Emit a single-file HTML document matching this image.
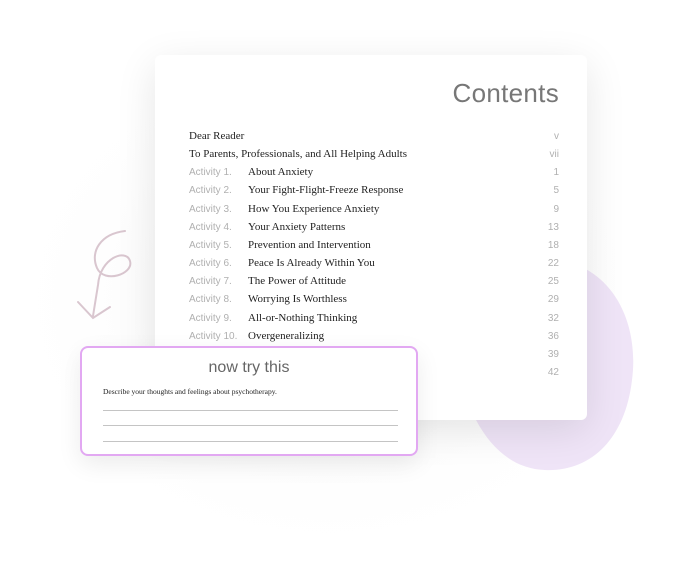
<!DOCTYPE html>
<html><head><meta charset="utf-8"><style>
body{margin:0;width:688px;height:562px;background:#fff;position:relative;overflow:hidden;font-family:"Liberation Serif",serif}
.bg{position:absolute;left:0;top:0}
.card{position:absolute;left:155px;top:55px;width:432px;height:365px;background:#fff;border-radius:6px;box-shadow:0 10px 40px rgba(0,0,0,0.10)}
.h{position:absolute;right:28px;top:23px;font-family:"Liberation Sans",sans-serif;font-size:26px;color:#777;letter-spacing:0.3px}
.row{position:absolute;left:34px;right:28px;height:18px;font-size:11px;color:#222;line-height:18px}
.row .a{position:absolute;left:0;top:1px;font-family:"Liberation Sans",sans-serif;color:#b0b0b0;font-size:10px}
.row .t{position:absolute;left:59px}
.row .n{position:absolute;right:0;top:1px;font-family:"Liberation Sans",sans-serif;color:#b0b0b0;font-size:10px}
.box{position:absolute;left:80px;top:346px;width:334px;height:106px;background:#fff;border:2px solid #e2a8f2;border-radius:8px;box-shadow:0 8px 24px rgba(0,0,0,0.08)}
.box .tt{position:absolute;left:0;right:0;top:11px;text-align:center;font-family:"Liberation Sans",sans-serif;font-size:16px;color:#666}
.box .d{position:absolute;left:21px;top:39px;font-size:7.5px;color:#222}
.ln{position:absolute;left:21px;width:295px;height:1px;background:#c4c4c4}
</style></head><body>
<svg class="bg" width="688" height="562">
<defs><radialGradient id="g" cx="0.5" cy="0.5" r="0.5"><stop offset="0" stop-color="#eee" stop-opacity="0.8"/><stop offset="1" stop-color="#fff" stop-opacity="0"/></radialGradient></defs>
<ellipse cx="330" cy="300" rx="340" ry="270" fill="url(#g)"/>
<path d="M540 258 C610 258 640 320 632 380 C625 440 590 472 545 470 C515 469 492 450 476 420 L540 258 Z" fill="#efe4f7"/>
<path d="M125 231 C100 234 90 252 97 268 C104 284 134 274 130 261 C126 248 100 258 98 285 L93 316" stroke="#d9c6cf" stroke-width="2" fill="none" stroke-linecap="round"/>
<path d="M78 302 L93 318 L110 307" stroke="#d9c6cf" stroke-width="2" fill="none" stroke-linecap="round"/>
</svg>
<div class="card">
<div class="h">Contents</div>
<div class="row" style="top:72px"><span style="position:absolute;left:0">Dear Reader</span><span class="n">v</span></div>
<div class="row" style="top:90px"><span style="position:absolute;left:0">To Parents, Professionals, and All Helping Adults</span><span class="n">vii</span></div>
<div class="row" style="top:108px"><span class="a">Activity 1.</span><span class="t">About Anxiety</span><span class="n">1</span></div>
<div class="row" style="top:126px"><span class="a">Activity 2.</span><span class="t">Your Fight-Flight-Freeze Response</span><span class="n">5</span></div>
<div class="row" style="top:145px"><span class="a">Activity 3.</span><span class="t">How You Experience Anxiety</span><span class="n">9</span></div>
<div class="row" style="top:163px"><span class="a">Activity 4.</span><span class="t">Your Anxiety Patterns</span><span class="n">13</span></div>
<div class="row" style="top:181px"><span class="a">Activity 5.</span><span class="t">Prevention and Intervention</span><span class="n">18</span></div>
<div class="row" style="top:199px"><span class="a">Activity 6.</span><span class="t">Peace Is Already Within You</span><span class="n">22</span></div>
<div class="row" style="top:217px"><span class="a">Activity 7.</span><span class="t">The Power of Attitude</span><span class="n">25</span></div>
<div class="row" style="top:235px"><span class="a">Activity 8.</span><span class="t">Worrying Is Worthless</span><span class="n">29</span></div>
<div class="row" style="top:254px"><span class="a">Activity 9.</span><span class="t">All-or-Nothing Thinking</span><span class="n">32</span></div>
<div class="row" style="top:272px"><span class="a">Activity 10.</span><span class="t">Overgeneralizing</span><span class="n">36</span></div>
<div class="row" style="top:290px"><span class="n">39</span></div>
<div class="row" style="top:308px"><span class="n">42</span></div>
</div>
<div class="box">
<div class="tt">now try this</div>
<div class="d">Describe your thoughts and feelings about psychotherapy.</div>
<div class="ln" style="top:62px"></div>
<div class="ln" style="top:77px"></div>
<div class="ln" style="top:93px"></div>
</div>
</body></html>
